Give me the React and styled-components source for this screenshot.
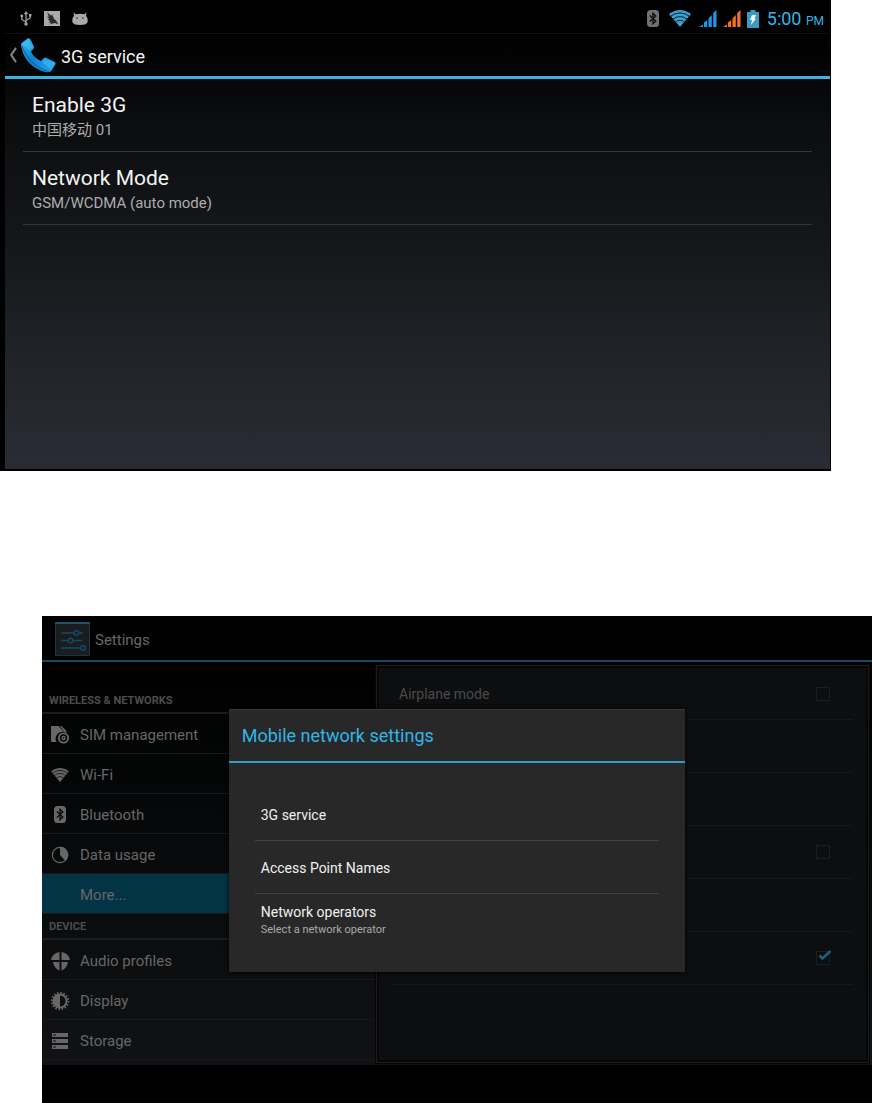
import React from 'react';
import styled, { createGlobalStyle } from 'styled-components';

const GlobalStyle = createGlobalStyle`
    * {
        box-sizing: border-box;
    }

    body {
        margin: 0;
        background-color: #fff;
        font-family: Roboto, "Noto Sans CJK SC", sans-serif;
    }

    h1, h2, h3, p, ul {
        margin: 0;
        padding: 0;
        font-weight: 400;
        list-style: none;
    }

    button {
        margin: 0;
        padding: 0;
        border: 0;
        background: none;
        color: inherit;
        font: inherit;
        text-align: left;
    }

    svg {
        display: block;
        flex: none;
    }
`

const Page = styled.main`
    display: flex;
    flex-direction: column;
    gap: 145px;
`

/* ---------- 3G service screen ---------- */

const ServiceScreen = styled.section`
    margin-right: 41px;
    padding: 0 1px 2px 5px;
    background-color: #000;
    color: #f3f3f3;
`

const StatusBar = styled.div`
    height: 33px;
    padding: 4px 6px 0 15px;
    display: flex;
    align-items: center;
    justify-content: space-between;
`

const StatusGroup = styled.div`
    display: flex;
    align-items: center;
    gap: ${props => props.$gap}px;
`

const Clock = styled.time`
    padding-top: 2px;
    color: #33b5e5;
    font-size: 18px;
    line-height: 22px;

    small {
        font-size: 12px;
    }
`

const ServiceBody = styled.div`
    min-height: 436px;
    border-top: 1px solid #101112;
    background: linear-gradient(#000 0%, #0c0d0f 20%, #15181b 50%, #22262a 80%, #292c35 100%);
`

const ServiceHeader = styled.header`
    height: 45px;
    padding-left: 4px;
    display: flex;
    align-items: center;
    border-bottom: 3px solid #3fb0df;
`

const BackButton = styled.button`
    display: flex;
    align-items: center;
    gap: 4px;
`

const ServiceTitle = styled.h1`
    padding: 3px 0 0 5px;
    font-size: 18px;
    line-height: 24px;
`

const ServiceList = styled.ul`
    padding: 0 18px;
`

const ServiceRow = styled.button`
    width: 100%;
    height: 73px;
    padding: 4px 9px 0;
    display: flex;
    flex-direction: column;
    justify-content: center;
    border-bottom: 1px solid #34373a;
`

const RowTitle = styled.span`
    font-size: 21px;
    line-height: 26px;
`

const RowSummary = styled.span`
    color: #adadad;
    font-size: 15px;
    line-height: 24px;
`

/* ---------- Settings screen ---------- */

const SettingsScreen = styled.section`
    position: relative;
    margin-left: 42px;
    background-color: #000;
    color: #676767;
`

const SettingsHeader = styled.header`
    height: 46px;
    padding: 2px 0 0 13px;
    display: flex;
    align-items: center;
    gap: 5px;
    border-bottom: 2px solid #144a5d;
`

const SettingsTitle = styled.h2`
    padding-top: 2px;
    font-size: 15px;
    line-height: 22px;
`

const Columns = styled.div`
    min-height: 403px;
    display: grid;
    grid-template-columns: 2fr 3fr;
    background: linear-gradient(#000, #07090a 45%, #101215);
`

const Sidebar = styled.nav`
    padding-top: 26px;
`

const Caption = styled.h3`
    height: 26px;
    padding: 2px 7px 0;
    border-bottom: 2px solid #1b1c1d;
    color: #4d4d4d;
    font-size: 11px;
    font-weight: 700;
    line-height: 22px;
`

const NavRow = styled.button`
    width: 100%;
    height: 40px;
    padding: 2px 8px 0;
    display: flex;
    align-items: center;
    gap: 10px;
    border-bottom: 1px solid #17191a;
    background-color: ${props => props.$active ? '#033445' : 'transparent'};
    font-size: 15px;
`

const IconSlot = styled.span`
    width: 20px;
    height: 20px;
    display: flex;
    align-items: center;
    justify-content: center;
`

const Panel = styled.div`
    margin: 3px 3px 2px 2px;
    padding: 2px 15px;
    border: 1px solid #1a1b1c;
    outline: 1px solid #060606;
    box-shadow: inset 0 0 0 2px #070707;
    background-color: #0d0e0f;
`

const PanelRow = styled.label`
    height: ${props => props.$first ? 52 : 53}px;
    padding: 0 23px 0 7px;
    display: flex;
    align-items: center;
    justify-content: space-between;
    border-bottom: 1px solid #161718;
    color: #4b4b4b;
    font-size: 14px;
`

const CheckWrap = styled.span`
    position: relative;
    display: flex;
    margin-left: auto;

    svg {
        position: absolute;
        top: -1px;
        left: 2px;
        display: none;
        pointer-events: none;
    }

    input:checked + svg {
        display: block;
    }
`

const CheckInput = styled.input`
    appearance: none;
    width: 14px;
    height: 14px;
    margin: 0;
    border: 1px solid #1c1d1e;
`

const NavBar = styled.footer`
    height: 38px;
    background-color: #000;
`

const Overlay = styled.div`
    position: absolute;
    inset: 0 0 38px;
    display: flex;
    align-items: center;
    justify-content: center;
`

const Dialog = styled.div`
    width: 55%;
    border-top: 1px solid #3a3b3b;
    border-radius: 1px;
    background-color: #282828;
    box-shadow: 0 1px 5px rgba(0, 0, 0, .8);
    color: #f0f0f0;
`

const DialogTitle = styled.h2`
    height: 53px;
    padding: 0 13px;
    border-bottom: 2px solid #2f9fca;
    color: #33b5e5;
    font-size: 18px;
    line-height: 51px;
`

const DialogList = styled.ul`
    padding: 25px 26px;
`

const DialogRow = styled.button`
    width: 100%;
    height: 53px;
    padding: 2px 6px 0;
    display: flex;
    flex-direction: column;
    justify-content: center;
    border-bottom: 1px solid ${props => props.$last ? 'transparent' : '#424242'};
    font-size: 14px;
    line-height: 18px;

    small {
        color: #a8a8a8;
        font-size: 11px;
    }
`

/* ---------- icons ---------- */

const UsbIcon = () => (
    <svg width="12" height="15" viewBox="0 0 12 15" fill="none" stroke="#a6a6a6" strokeWidth="1.2">
        <path d="M6 2v10M6 11L1.800 8.500V5.500M6 9.500l4.200-2.500V5" />
        <path d="M6 0l2.200 3.200H3.800zM9 3h2.400v2.400H9z" fill="#a6a6a6" stroke="none" />
        <circle cx="1.800" cy="5" r="1.400" fill="#a6a6a6" stroke="none" />
        <circle cx="6" cy="13" r="1.700" fill="#a6a6a6" stroke="none" />
    </svg>
)

const BirdIcon = () => (
    <svg width="16" height="15" viewBox="0 0 16 15">
        <path d="M0 0h16v15H0z" fill="#a9a9a9" />
        <path d="M3 1.200L7.500 5 8 3l2.200 5L12 9.500l2.500 4-3.500-1.500-6 1.500 2.500-1.800-3.500-.4 2.500-1L3.500 8.500l2-.4L3 5.500l2 .2z" fill="#2a2a2a" />
    </svg>
)

const AndroidIcon = () => (
    <svg width="16" height="14" viewBox="0 0 16 14">
        <path d="M1.500.5L3.800 2.300Q8 1 12.200 2.300L14.500.5 14 3.800Q16 6 15.800 9q-.3 3-2.800 3.500L8 13l-5-.5Q.5 12 .2 9 0 6 2 3.800z" fill="#a9a9a9" />
        <circle cx="5" cy="6" r=".8" fill="#222" />
        <circle cx="11" cy="6" r=".8" fill="#222" />
    </svg>
)

const BluetoothIcon = ({ color, rune, width = 12, height = 17 }) => (
    <svg width={width} height={height} viewBox="0 0 12 17">
        <rect width="12" height="17" rx="3.500" fill={color} />
        <path d="M2.800 5.500l6 5.500L6 13.800V3.200L8.800 6l-6 5.500" fill="none" stroke={rune} strokeWidth="1.300" />
    </svg>
)

const WifiIcon = ({ color, width = 22, height = 17 }) => (
    <svg width={width} height={height} viewBox="0 0 22 17">
        <path d="M0 4Q11-4 22 4L11 17z" fill={color} />
        <path d="M1.500 6.300Q11-.5 20.500 6.300M4 9.200Q11 3.800 18 9.200M6.500 12Q11 8.500 15.500 12" fill="none" stroke="#000" strokeWidth=".8" />
    </svg>
)

const SignalIcon = ({ color }) => (
    <svg width="18" height="17" viewBox="0 0 18 17" fill={color}>
        <path d="M0 17l4-2.500V17zM5 17v-4.500L8.200 10v7zM9.500 17V8.500L12.800 5v12zM14.200 17V3L17.500 0v17z" />
    </svg>
)

const BatteryIcon = () => (
    <svg width="12" height="18" viewBox="0 0 12 18">
        <path d="M3.500 0h5v2H12v16H0V2h3.500z" fill="#3a9bbf" />
        <path d="M5 5h4L7.500 8.500H9L4 15l1-5H3z" fill="#f4fbff" />
    </svg>
)

const ChevronIcon = () => (
    <svg width="8" height="16" viewBox="0 0 8 16">
        <path d="M7 .8L2.200 8 7 15.200" fill="none" stroke="#808080" strokeWidth="2.200" />
    </svg>
)

const PhoneIcon = () => (
    <svg width="35" height="35" viewBox="0 0 35 35">
        <defs>
            <linearGradient id="phone" x1="0" y1="0" x2="1" y2="1">
                <stop offset="0" stopColor="#39bdf5" />
                <stop offset=".45" stopColor="#0f84cf" />
                <stop offset="1" stopColor="#2aa5ea" />
            </linearGradient>
        </defs>
        <path d="M.5 5L7 .3Q8.500 0 9.500 1.500L13 8.500q.6 1.500-.6 2.500L10 13.500Q13 20 20 23l2.800-3q1.200-1 2.600-.3L34 24q1 .8.500 2.200L31 32q-1.500 2.500-5 2.200Q14 32 6.500 23 1 15.500.2 7.500 0 6 .5 5z" fill="url(#phone)" />
        <path d="M1.500 6L7.500 1.500 12 9.500 8.500 12.500zM23.500 20.500l10 4.500-4 5.500-8.500-6z" fill="#52c8fa" opacity=".45" />
        <path d="M1 8Q4 17 10.500 23.500 18 31 28 33.500" fill="none" stroke="#0a5c9c" strokeWidth="1.500" opacity=".7" />
    </svg>
)

const SettingsIcon = () => (
    <svg width="35" height="34" viewBox="0 0 35 34">
        <path d="M0 1h35v33H0z" fill="#1b1c1d" />
        <path d="M.5 1v32.500h34V1" fill="none" stroke="#12384a" />
        <path d="M0 0h35v2H0z" fill="#1d5368" />
        <g fill="none" stroke="#144a6b" strokeWidth="1.400">
            <path d="M6 11h13M24 11h4M6 18.500h7M18 18.500h9M6 26h19" />
            <circle cx="21.500" cy="11" r="2.300" />
            <circle cx="15.500" cy="18.500" r="2.300" />
            <circle cx="28" cy="26" r="2.300" />
        </g>
    </svg>
)

const SimIcon = () => (
    <svg width="20" height="20" viewBox="0 0 20 20">
        <path d="M1 1h7.500L14 6.800A7 7 0 0 0 6.500 17H2Q1 17 1 16z" fill="#676767" />
        <path d="M10 1h1.500L16.500 6v2l-2-.8z" fill="#676767" />
        <circle cx="13.500" cy="13" r="4.600" fill="none" stroke="#676767" strokeWidth="1.900" />
        <circle cx="13.500" cy="13" r="2.200" fill="#676767" />
        <circle cx="13.500" cy="13" r=".8" fill="#050505" />
    </svg>
)

const DataIcon = () => (
    <svg width="18" height="18" viewBox="0 0 18 18">
        <circle cx="9" cy="9" r="7.700" fill="none" stroke="#676767" strokeWidth="1.200" />
        <path d="M9 .8A8.200 8.200 0 0 1 14.500 15L9 9z" fill="#676767" />
    </svg>
)

const AudioIcon = () => (
    <svg width="19" height="20" viewBox="0 0 19 20" fill="#676767">
        <path d="M8.500 1v8H0Q1 2.500 8.500 1zM10.500 1v8H19Q18 2.500 10.500 1zM2 11h6.500v8.500Q3 17.500 2 11zM17 11h-6.500v8.500Q16 17.500 17 11z" />
    </svg>
)

const DisplayIcon = () => (
    <svg width="20" height="20" viewBox="0 0 20 20">
        <circle cx="10" cy="10" r="8" fill="none" stroke="#676767" strokeWidth="2.500" strokeDasharray="1.500 1.640" />
        <circle cx="10" cy="10" r="6.500" fill="none" stroke="#676767" strokeWidth="1.800" />
        <path d="M10 3.500a6.500 6.500 0 0 0 0 13z" fill="#676767" />
    </svg>
)

const StorageIcon = () => (
    <svg width="16" height="16" viewBox="0 0 16 16">
        <path d="M0 0h16v4H0zM0 6h16v4H0zM0 12h16v4H0z" fill="#676767" />
        <path d="M1 1.500h3v1H1zM1 7.500h3v1H1zM1 13.500h3v1H1z" fill="#0d0f11" />
    </svg>
)

const TickIcon = () => (
    <svg width="14" height="11" viewBox="0 0 14 11">
        <path d="M1.500 5.500L4.500 8.500 12.500 1" fill="none" stroke="#15617e" strokeWidth="2.600" />
    </svg>
)

/* ---------- data ---------- */

const wireless = [
    { label: 'SIM management', icon: <SimIcon /> },
    { label: 'Wi-Fi', icon: <WifiIcon color="#676767" width={18} height={14} /> },
    { label: 'Bluetooth', icon: <BluetoothIcon color="#676767" rune="#0a0b0c" /> },
    { label: 'Data usage', icon: <DataIcon /> },
    { label: 'More...', active: true },
]

const device = [
    { label: 'Audio profiles', icon: <AudioIcon /> },
    { label: 'Display', icon: <DisplayIcon /> },
    { label: 'Storage', icon: <StorageIcon /> },
]

const panelRows = [
    { label: 'Airplane mode', check: true },
    {},
    {},
    { check: true },
    {},
    { check: true, checked: true },
]

const NavGroup = ({ title, items }) => (
    <section>
        <Caption>{title}</Caption>
        {items.map(item => (
            <NavRow key={item.label} type="button" $active={item.active}>
                <IconSlot>{item.icon}</IconSlot>
                {item.label}
            </NavRow>
        ))}
    </section>
)

const Check = ({ checked, name }) => (
    <CheckWrap>
        <CheckInput type="checkbox" defaultChecked={checked} aria-label={name} />
        <TickIcon />
    </CheckWrap>
)

const Service = () => (
    <ServiceScreen>
        <StatusBar>
            <StatusGroup $gap={12}>
                <UsbIcon />
                <BirdIcon />
                <AndroidIcon />
            </StatusGroup>
            <StatusGroup $gap={8}>
                <StatusGroup $gap={10}>
                    <BluetoothIcon color="#707070" rune="#0b0b0b" />
                    <WifiIcon color="#3aa0c9" />
                </StatusGroup>
                <StatusGroup $gap={6}>
                    <SignalIcon color="#1a9be6" />
                    <SignalIcon color="#f4711f" />
                    <BatteryIcon />
                </StatusGroup>
                <Clock>5:00 <small>PM</small></Clock>
            </StatusGroup>
        </StatusBar>
        <ServiceBody>
            <ServiceHeader>
                <BackButton type="button" aria-label="Back">
                    <ChevronIcon />
                    <PhoneIcon />
                </BackButton>
                <ServiceTitle>3G service</ServiceTitle>
            </ServiceHeader>
            <ServiceList>
                <li>
                    <ServiceRow type="button">
                        <RowTitle>Enable 3G</RowTitle>
                        <RowSummary>中国移动 01</RowSummary>
                    </ServiceRow>
                </li>
                <li>
                    <ServiceRow type="button">
                        <RowTitle>Network Mode</RowTitle>
                        <RowSummary>GSM/WCDMA (auto mode)</RowSummary>
                    </ServiceRow>
                </li>
            </ServiceList>
        </ServiceBody>
    </ServiceScreen>
)

const Settings = () => (
    <SettingsScreen>
        <SettingsHeader>
            <SettingsIcon />
            <SettingsTitle>Settings</SettingsTitle>
        </SettingsHeader>
        <Columns>
            <Sidebar>
                <NavGroup title="WIRELESS & NETWORKS" items={wireless} />
                <NavGroup title="DEVICE" items={device} />
            </Sidebar>
            <Panel>
                {panelRows.map((row, i) => (
                    <PanelRow key={i} as={row.check ? 'label' : 'div'} $first={i === 0}>
                        {row.label}
                        {row.check && <Check checked={row.checked} name={row.label || `Option ${i + 1}`} />}
                    </PanelRow>
                ))}
            </Panel>
        </Columns>
        <NavBar />
        <Overlay>
            <Dialog role="dialog" aria-labelledby="dialog-title">
                <DialogTitle id="dialog-title">Mobile network settings</DialogTitle>
                <DialogList>
                    <li><DialogRow type="button">3G service</DialogRow></li>
                    <li><DialogRow type="button">Access Point Names</DialogRow></li>
                    <li>
                        <DialogRow type="button" $last>
                            Network operators
                            <small>Select a network operator</small>
                        </DialogRow>
                    </li>
                </DialogList>
            </Dialog>
        </Overlay>
    </SettingsScreen>
)

const App = () => (
    <Page>
        <GlobalStyle />
        <Service />
        <Settings />
    </Page>
)

export default App;
